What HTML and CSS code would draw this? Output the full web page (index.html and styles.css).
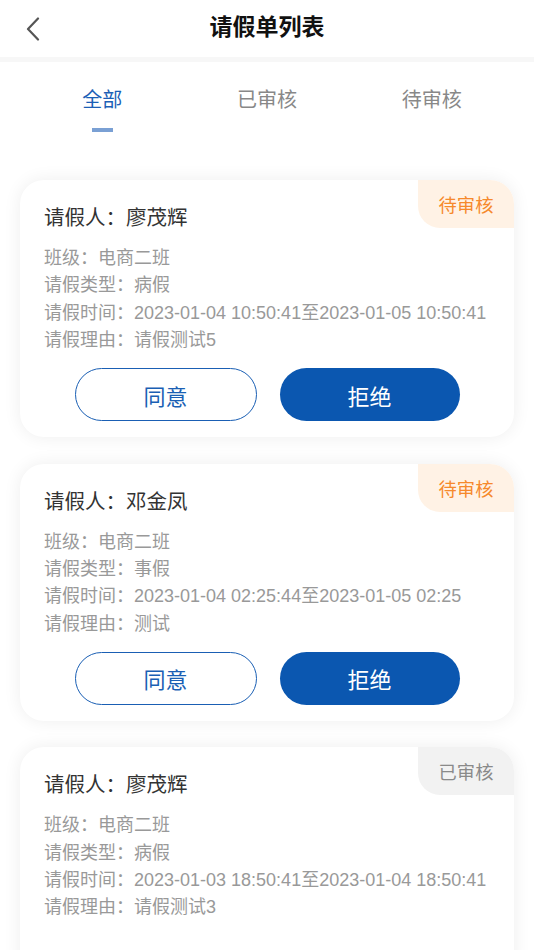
FILE: index.html
```html
<!DOCTYPE html>
<html lang="zh-CN">
<head>
<meta charset="utf-8">
<title>请假单列表</title>
<link rel="stylesheet" href="styles.css">
</head>
<body>
<div class="page">
  <header class="header">
    <span class="back">
      <svg width="14" height="24" viewBox="0 0 14 24"><path d="M12 1.5 L2 12 L12 22.5" fill="none" stroke="#555" stroke-width="2.2" stroke-linecap="round" stroke-linejoin="round"/></svg>
    </span>
    <h1 class="title">请假单列表</h1>
  </header>
  <div class="band"></div>
  <nav class="tabs">
    <div class="tab active"><span>全部</span><i class="bar"></i></div>
    <div class="tab"><span>已审核</span></div>
    <div class="tab"><span>待审核</span></div>
  </nav>
  <main class="list">
    <section class="card">
      <span class="badge pending">待审核</span>
      <div class="name">请假人：廖茂辉</div>
      <div class="info">
        <p>班级：电商二班</p>
        <p>请假类型：病假</p>
        <p>请假时间：2023-01-04 10:50:41至2023-01-05 10:50:41</p>
        <p>请假理由：请假测试5</p>
      </div>
      <div class="actions">
        <button class="btn agree">同意</button>
        <button class="btn reject">拒绝</button>
      </div>
    </section>
    <section class="card">
      <span class="badge pending">待审核</span>
      <div class="name">请假人：邓金凤</div>
      <div class="info">
        <p>班级：电商二班</p>
        <p>请假类型：事假</p>
        <p>请假时间：2023-01-04 02:25:44至2023-01-05 02:25</p>
        <p>请假理由：测试</p>
      </div>
      <div class="actions">
        <button class="btn agree">同意</button>
        <button class="btn reject">拒绝</button>
      </div>
    </section>
    <section class="card card-done">
      <span class="badge done">已审核</span>
      <div class="name">请假人：廖茂辉</div>
      <div class="info">
        <p>班级：电商二班</p>
        <p>请假类型：病假</p>
        <p>请假时间：2023-01-03 18:50:41至2023-01-04 18:50:41</p>
        <p>请假理由：请假测试3</p>
      </div>
    </section>
  </main>
</div>
</body>
</html>
```
FILE: styles.css
```css
* { box-sizing: border-box; }
html, body { margin: 0; padding: 0; background: #fff; }
body {
  font-family: "Liberation Sans", "Noto Sans CJK SC", sans-serif;
  color: #333;
  width: 534px;
  height: 950px;
  overflow: hidden;
}
.header {
  height: 57px;
  display: flex;
  align-items: center;
  justify-content: center;
  position: relative;
  background: #fff;
}
.back {
  position: absolute;
  left: 26px;
  top: 17px;
  width: 14px;
  height: 24px;
  display: flex;
}
.title {
  margin: 0;
  font-size: 23px;
  font-weight: 700;
  color: #111;
  line-height: 1;
  padding-bottom: 2px;
}
.band { height: 5px; background: #f7f7f7; }
.tabs {
  display: grid;
  grid-template-columns: repeat(3, 1fr);
  padding: 0 20px;
  height: 118px;
}
.tab {
  display: flex;
  flex-direction: column;
  align-items: center;
  padding-top: 25px;
  font-size: 20px;
  color: #888;
  line-height: 26px;
}
.tab.active { color: #1c5fb6; }
.tab .bar {
  display: block;
  width: 21px;
  height: 4px;
  background: #7aa0d4;
  margin-top: 15px;
}
.list {
  display: flex;
  flex-direction: column;
  gap: 26.5px;
  padding: 0 20px;
}
.card {
  position: relative;
  background: #fff;
  border-radius: 24px;
  box-shadow: 0 0 18px rgba(0, 0, 0, 0.07);
  padding: 23px 24px 16px;
}
.card-done { padding-bottom: 60px; }
.badge {
  position: absolute;
  top: 0;
  right: 0;
  width: 96px;
  height: 48px;
  border-radius: 0 24px 0 22px;
  display: flex;
  align-items: center;
  justify-content: center;
  font-size: 18.3px;
}
.badge.pending { background: #fff2e5; color: #f6892c; }
.badge.done { background: #f2f2f2; color: #8a8a8a; }
.name {
  font-size: 20.5px;
  line-height: 30px;
  color: #333;
}
.info { margin-top: 12px; }
.info p {
  margin: 0;
  font-size: 18px;
  line-height: 27.3px;
  color: #999;
  white-space: nowrap;
}
.actions {
  display: flex;
  justify-content: center;
  gap: 23px;
  margin-top: 14px;
}
.btn {
  width: 182px;
  height: 53px;
  border-radius: 27px;
  font-family: inherit;
  font-size: 22px;
  display: flex;
  align-items: center;
  justify-content: center;
  padding: 0;
}
.btn.agree {
  background: #fff;
  border: 1.5px solid #1a5fb4;
  color: #1a5fb4;
}
.btn.reject {
  width: 180px;
  background: #0b57b0;
  border: none;
  color: #fff;
}
```
